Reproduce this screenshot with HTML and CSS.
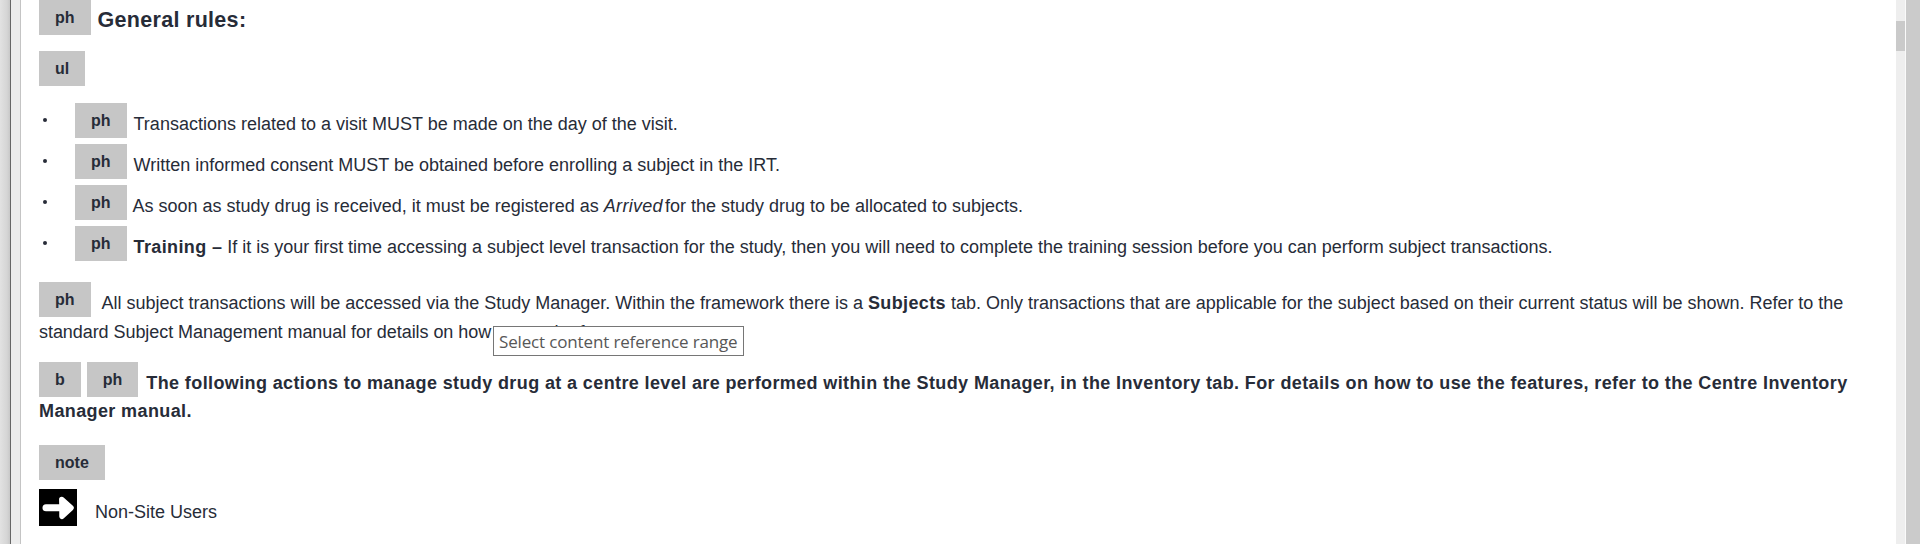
FILE: index.html
```
<!DOCTYPE html>
<html lang="en">
<head>
<meta charset="utf-8">
<title>General rules</title>
<link rel="stylesheet" href="styles.css">
</head>
<body>
<div class="app">
  <div class="rail"></div>
  <div class="gutter"></div>
  <main class="editor">
    <div class="row heading-row"><span class="tag">ph</span><h1 class="heading">General rules:</h1></div>
    <div class="row ul-row"><span class="tag">ul</span></div>
    <ul class="rules">
      <li class="row rule"><span class="dot"></span><span class="tag">ph</span><span class="text t1">Transactions related to a visit MUST be made on the day of the visit.</span></li>
      <li class="row rule"><span class="dot"></span><span class="tag">ph</span><span class="text t2">Written informed consent MUST be obtained before enrolling a subject in the IRT.</span></li>
      <li class="row rule"><span class="dot"></span><span class="tag">ph</span><span class="text t3">As soon as study drug is received, it must be registered as <i>Arrived</i> for the study drug to be allocated to subjects.</span></li>
      <li class="row rule"><span class="dot"></span><span class="tag">ph</span><span class="text t4"><b>Training –</b> If it is your first time accessing a subject level transaction for the study, then you will need to complete the training session before you can perform subject transactions.</span></li>
    </ul>
    <section class="para">
      <div class="row"><span class="tag">ph</span><span class="text p1">All subject transactions will be accessed via the Study Manager. Within the framework there is a <b>Subjects</b> tab. Only transactions that are applicable for the subject based on their current status will be shown. Refer to the</span></div>
      <div class="line p2">standard Subject Management manual for details on how to use the features.</div>
      <div class="tooltip">Select content reference range</div>
    </section>
    <section class="para strong">
      <div class="row"><span class="tag">b</span><span class="tag next">ph</span><span class="text s1">The following actions to manage study drug at a centre level are performed within the Study Manager, in the Inventory tab. For details on how to use the features, refer to the Centre Inventory</span></div>
      <div class="line s2">Manager manual.</div>
    </section>
    <div class="row note-row"><span class="tag">note</span></div>
    <div class="row users-row">
      <svg class="arrow" width="38" height="37" viewBox="0 0 38 37"><path fill="#000" d="M0 0h38v37H0z"/><path d="M7 18.7H28" fill="none" stroke="#fff" stroke-width="7" stroke-linecap="round"/><path d="M22.8 10.5L32 18.9L23 27.3V18.9Z" fill="#fff" stroke="#fff" stroke-width="5.5" stroke-linejoin="round"/></svg>
      <span class="text u1">Non-Site Users</span>
    </div>
  </main>
  <div class="scrollbar"><div class="thumb"></div></div>
  <div class="edge"></div>
</div>
</body>
</html>
```
FILE: styles.css
```
* { box-sizing: border-box; }
body { margin: 0; background: #fff; color: #272c38; font-family: "Liberation Sans", Arial, sans-serif; font-size: 18px; overflow: hidden; }
.app { display: flex; height: 544px; }
.rail { width: 11px; background: linear-gradient(90deg, #e2e2e2, #d5d5d5 70%, #c8c8c8); border-right: 1px solid #666; }
.gutter { width: 10px; background: #ececec; border-right: 1px solid #c4c4c4; }
.editor { flex: 1; min-width: 0; padding-left: 18px; }
.row { display: flex; height: 35px; white-space: nowrap; }
.tag { flex: none; height: 35px; padding: 0 16px; background: #c6c6c6; font-size: 16px; font-weight: bold; line-height: 35px; letter-spacing: 0; }
.next { margin-left: 6px; }
.heading { margin: 0 0 0 7px; font-size: 21.5px; line-height: 41px; letter-spacing: 0.3px; }
.ul-row { margin-top: 16px; }
.rules { list-style: none; margin: 17px 0 0; padding: 0; }
.rule { margin-bottom: 6px; }
.dot { width: 4px; height: 4px; margin: 15px 28px 0 4px; border-radius: 50%; background: #272c38; }
.text { margin-left: 7px; line-height: 42px; }
.text b { letter-spacing: 0.38px; }
.text i { margin-right: -3px; letter-spacing: 0.3px; }
.t3 { margin-left: 6px; }
.t4 { letter-spacing: -0.013px; }
.p1 { margin-left: 11px; letter-spacing: -0.01px; }
.para { position: relative; margin-top: 21px; }
.para + .para { margin-top: 17px; }
.line { height: 28px; line-height: 28px; white-space: nowrap; }
.p2 { line-height: 30px; letter-spacing: -0.06px; }
.strong { font-weight: bold; letter-spacing: 0.385px; }
.s1 { margin-left: 8px; }
.tooltip { position: absolute; left: 454px; top: 44px; width: 251px; height: 30px; padding-left: 5px; border: 1px solid #767676; background: #fff; color: #575757; font: 17px/29px "Open Sans", sans-serif; letter-spacing: -0.15px; white-space: nowrap; }
.note-row { margin-top: 20px; }
.users-row { height: 37px; margin-top: 9px; }
.arrow { flex: none; }
.u1 { margin-left: 18px; line-height: 47px; }
.scrollbar { width: 10px; padding-top: 21px; background: #eee; border-right: 1px solid #fafafa; }
.thumb { height: 30px; background: #cacaca; }
.edge { width: 14px; background: #cbcbcb; }
```
